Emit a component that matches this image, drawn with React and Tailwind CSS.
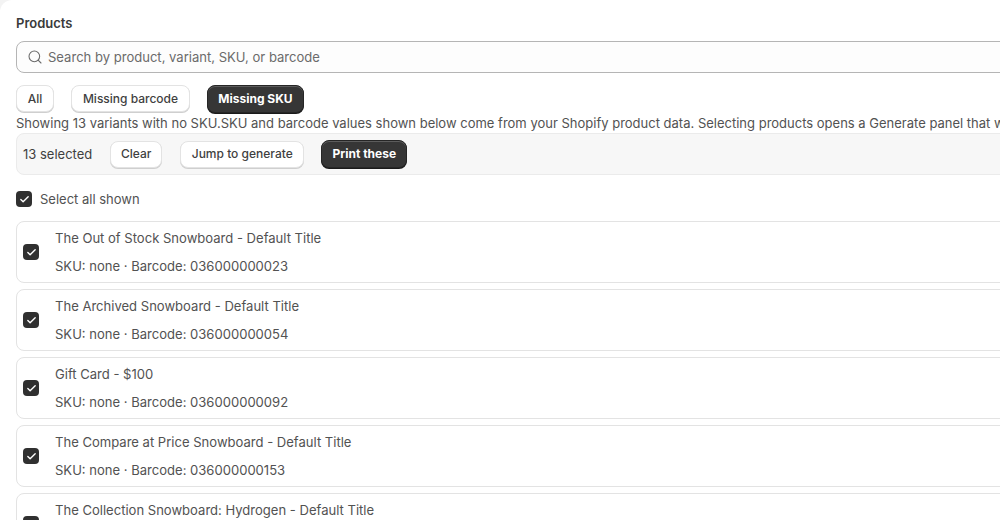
import { Search, Check } from 'lucide-react'

const rows = [
  { title: 'The Out of Stock Snowboard - Default Title', barcode: '036000000023' },
  { title: 'The Archived Snowboard - Default Title', barcode: '036000000054' },
  { title: 'Gift Card - $100', barcode: '036000000092' },
  { title: 'The Compare at Price Snowboard - Default Title', barcode: '036000000153' },
  { title: 'The Collection Snowboard: Hydrogen - Default Title', barcode: '036000000191' },
]

const btn = 'h-[27px] shrink-0 whitespace-nowrap rounded-lg border border-[#e3e3e3] bg-white text-[12px] leading-none font-[550] text-[#3f3f3f] shadow-[0_1px_0_#cfcfcf]'
const btnDark = 'h-[28px] shrink-0 whitespace-nowrap rounded-lg border border-[#262626] bg-[#363636] text-[12px] leading-none font-[650] text-white shadow-[inset_0_1px_0_#5c5c5c,0_1px_0_#1a1a1a]'

function Checkbox() {
  return (
    <span className="w-4 h-4 shrink-0 rounded-[4px] bg-[#303030] flex items-center justify-center">
      <Check size={11} strokeWidth={3} className="text-white" />
    </span>
  )
}

export default function App() {
  return (
    <div className="w-[1000px] h-[520px] overflow-hidden bg-[#f3f3f3]">
      <div className="w-[1120px] h-[520px] rounded-tl-xl bg-white pl-4 pt-[15px] font-['Inter',sans-serif] text-[13px] text-[#525252]">
        <h2 className="text-[13px] leading-4 font-semibold text-[#3a3a3a]">Products</h2>

        <div className="mt-[10px] h-8 rounded-lg border border-[#b5b5b5] bg-[#fdfdfd] flex items-center pl-[10px] gap-[5px]">
          <Search size={16} strokeWidth={1.6} className="text-[#6b6b6b]" />
          <span className="pt-[2px] text-[13.05px] text-[#6b6b6b]">Search by product, variant, SKU, or barcode</span>
        </div>

        <div className="mt-3 h-7 flex items-start gap-[17px]">
          <button className={btn + ' w-[38px]'}>All</button>
          <button className={btn + ' w-[119px]'}>Missing barcode</button>
          <button className={btnDark + ' w-[97px]'}>Missing SKU</button>
        </div>

        <p className="whitespace-nowrap text-[13px] leading-[18px] mt-[1px]">
          Showing 13 variants with no SKU.SKU and barcode values shown below come from your Shopify product data. Selecting products opens a Generate panel that will
        </p>

        <div className="h-[42px] rounded-lg border border-[#ebebeb] bg-[#f7f7f7] flex items-center pl-[6px] mt-[1px]">
          <span className="pt-[2px] text-[13px] text-[#3f3f3f]">13 selected</span>
          <button className={btn + ' w-[52px] ml-[18px]'}>Clear</button>
          <button className={btn + ' w-[124px] ml-[18px]'}>Jump to generate</button>
          <button className={btnDark + ' w-[86px] ml-[17px]'}>Print these</button>
        </div>

        <label className="flex items-center gap-2 mt-4 h-4">
          <Checkbox />
          <span className="pt-[2px]">Select all shown</span>
        </label>

        <div className="mt-[14px] flex flex-col gap-[6px]">
          {rows.map(row => (
            <div key={row.barcode} className="h-[62px] shrink-0 rounded-lg border border-[#e3e3e3] bg-white flex items-center pl-[6px] gap-4">
              <Checkbox />
              <div className="flex flex-col gap-[10px] text-[13.05px]">
                <span className="leading-[18px]">{row.title}</span>
                <span className="leading-[18px]">SKU: none · Barcode: {row.barcode}</span>
              </div>
            </div>
          ))}
        </div>
      </div>
    </div>
  )
}
